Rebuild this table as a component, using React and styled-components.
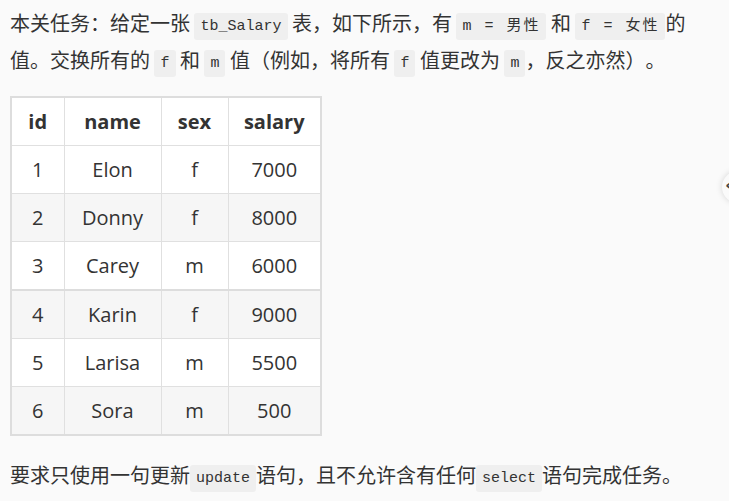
import styled, { createGlobalStyle } from 'styled-components';

const GlobalStyle = createGlobalStyle`
    html, body{
        margin: 0;
        padding: 0;
        background-color: #fafafa;
        overflow: hidden;
    }
`;

const rows = [
    { id: 1, name: 'Elon', sex: 'f', salary: 7000 },
    { id: 2, name: 'Donny', sex: 'f', salary: 8000 },
    { id: 3, name: 'Carey', sex: 'm', salary: 6000 },
    { id: 4, name: 'Karin', sex: 'f', salary: 9000 },
    { id: 5, name: 'Larisa', sex: 'm', salary: 5500 },
    { id: 6, name: 'Sora', sex: 'm', salary: 500 },
];

const columns = [
    { key: 'id', width: 53 },
    { key: 'name', width: 97 },
    { key: 'sex', width: 67 },
    { key: 'salary', width: 93 },
];

export default function App(){
    return(
        <Page>
            <GlobalStyle/>
            <Intro>
                本关任务：给定一张 <Code>tb_Salary</Code> 表，如下所示，有 <Code $wide>m = 男性</Code> 和 <Code $wide>f = 女性</Code>的值。交换所有的 <Code>f</Code> 和 <Code>m</Code> 值（例如，将所有 <Code>f</Code> 值更改为 <Code>m</Code>，反之亦然）。
            </Intro>

            <Table>
                <colgroup>
                    {columns.map(c => <col key={c.key} style={{ width: c.width }}/>)}
                </colgroup>
                <thead>
                    <tr>
                        {columns.map(c => <Th key={c.key}>{c.key}</Th>)}
                    </tr>
                </thead>
                <tbody>
                    {rows.map((r, i) => (
                        <Row key={r.id} $striped={i % 2 === 1} $split={i === 3}>
                            <Td>{r.id}</Td>
                            <Td>{r.name}</Td>
                            <Td>{r.sex}</Td>
                            <Td>{r.salary}</Td>
                        </Row>
                    ))}
                </tbody>
            </Table>

            <Note>
                要求只使用一句更新<Code>update</Code>语句，且不允许含有任何<Code>select</Code>语句完成任务。
            </Note>

            <SideToggle>
                <span>‹</span>
            </SideToggle>
        </Page>
    );
}

const Page = styled.div`
    position: relative;
    box-sizing: border-box;
    width: 729px;
    height: 501px;
    padding: 4px 10px 0 10px;
    color: #333333;
    font-family: "Open Sans", "Noto Sans CJK SC", sans-serif;
    text-spacing-trim: space-all;
`;

const Intro = styled.p`
    margin: 0;
    font-family: "Noto Sans CJK SC", sans-serif;
    font-size: 20px;
    line-height: 37px;
`;

const Note = styled.p`
    margin: 20px 0 0 0;
    font-family: "Noto Sans CJK SC", sans-serif;
    font-size: 20px;
    line-height: 37px;
`;

const Code = styled.code`
    display: inline-block;
    padding: 0 6px;
    line-height: 27px;
    border-radius: 3px;
    background-color: #efefef;
    color: #333333;
    font-family: "Liberation Mono", "Noto Sans CJK SC", monospace;
    font-size: 15px;
    letter-spacing: ${p => p.$wide ? '2px' : '0'};
    vertical-align: 1px;
`;

const Table = styled.table`
    margin-top: 18px;
    table-layout: fixed;
    border-collapse: collapse;
    border: 2px solid #dddddd;
    background-color: #ffffff;
    font-size: 20px;
`;

const Th = styled.th`
    height: 47px;
    padding: 0;
    border: 1px solid #e0e0e0;
    font-weight: 700;
    text-align: center;
`;

const Row = styled.tr`
    background-color: ${p => p.$striped ? '#f6f6f6' : '#ffffff'};
    border-top: ${p => p.$split ? '2px solid #dddddd' : 'none'};
`;

const Td = styled.td`
    height: 47px;
    padding: 0;
    border: 1px solid #e0e0e0;
    text-align: center;
`;

const SideToggle = styled.div`
    position: absolute;
    top: 171px;
    left: 722px;
    width: 32px;
    height: 32px;
    border-radius: 50%;
    background-color: #fafafa;
    box-shadow: 0 0 6px rgba(0,0,0,.15);

    span{
        position: absolute;
        left: 3px;
        top: 4px;
        font-size: 18px;
        line-height: 20px;
        font-weight: 700;
        color: #444444;
        font-family: "DejaVu Sans", sans-serif;
    }
`;
